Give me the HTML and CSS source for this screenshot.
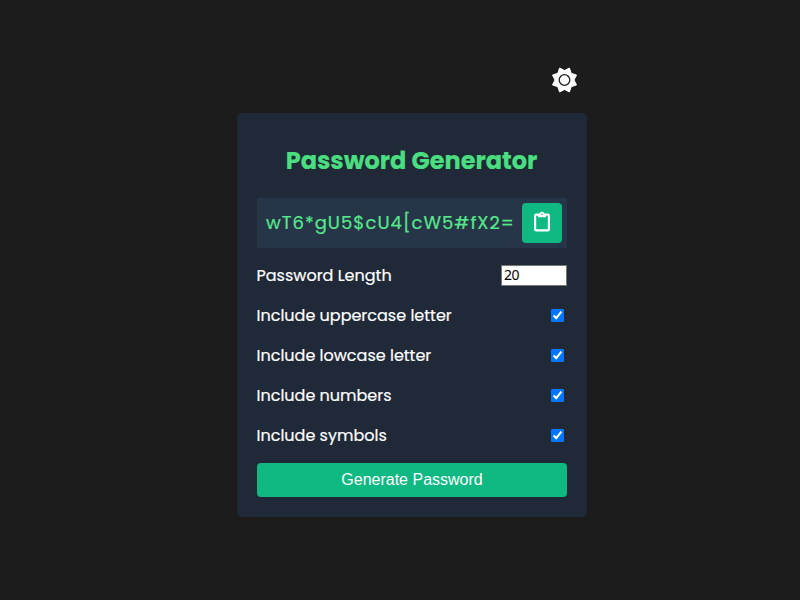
FILE: index.html
```html
<!DOCTYPE html>
<html lang="en">
<head>
<meta charset="utf-8">
<title>Password Generator</title>
<link rel="stylesheet" href="styles.css">
</head>
<body>
<main class="wrapper">
  <button class="theme" aria-label="Toggle theme">
    <svg width="26" height="26" viewBox="-13.5 -13 26 26"><path fill="#fff" stroke="#fff" stroke-width="1" stroke-linejoin="round" d="M0-9.5 4.9-12 6.7-6.7 12-4.9 9.5 0 12 4.9 6.7 6.7 4.9 12 0 9.5-4.9 12-6.7 6.7-12 4.9-9.5 0-12-4.9-6.7-6.7-4.9-12Z"/><circle r="5.3" fill="#fff" stroke="#1c1c1c" stroke-width="1.3"/></svg>
  </button>
  <section class="container">
    <h2 class="title">Password Generator</h2>
    <div class="result">
      <span class="password">wT6*gU5$cU4[cW5#fX2=</span>
      <button class="copy" aria-label="Copy">
        <svg width="16" height="21" viewBox="0 0 16 21" fill="none" stroke="#fff" stroke-width="2.2"><rect x="1.1" y="3.6" width="13.8" height="15.8" rx="1.2"/><path fill="#fff" stroke="none" d="M4 3H5.2A2.9 2.9 0 0 1 10.8 3H12V6.2H4Z"/><circle cx="8" cy="3.2" r=".8" fill="#10b981" stroke="none"/></svg>
      </button>
    </div>
    <div class="setting"><label for="length">Password Length</label><input class="number" id="length" type="number" value="20"></div>
    <div class="setting"><label for="upper">Include uppercase letter</label><input id="upper" type="checkbox" checked></div>
    <div class="setting"><label for="lower">Include lowcase letter</label><input id="lower" type="checkbox" checked></div>
    <div class="setting"><label for="numbers">Include numbers</label><input id="numbers" type="checkbox" checked></div>
    <div class="setting"><label for="symbols">Include symbols</label><input id="symbols" type="checkbox" checked></div>
    <button class="generate">Generate Password</button>
  </section>
</main>
</body>
</html>
```
FILE: styles.css
```css
* { box-sizing: border-box; }
body {
  margin: 0;
  background: #1c1c1c;
  color: #fff;
  font-family: Poppins, Inter, sans-serif;
  font-feature-settings: "cv11";
}
.wrapper {
  width: 350px;
  margin-left: 237px;
  padding-top: 67px;
  display: flex;
  flex-direction: column;
}
.theme {
  align-self: flex-end;
  display: flex;
  width: 26px;
  height: 26px;
  margin: 0 10px 20px 0;
  padding: 0;
  border: 0;
  background: none;
}
.theme svg { overflow: visible; }
.container {
  height: 404px;
  padding: 20px;
  background: #1f2937;
  border-radius: 5px;
}
.title {
  margin: 10px 0 19px;
  padding-right: 1px;
  text-align: center;
  line-height: 36px;
  font-size: 24px;
  font-weight: 700;
  color: #4ade80;
  white-space: nowrap;
  -webkit-text-stroke: .2px;
}
.result {
  height: 50px;
  padding: 0 5px 0 9px;
  display: flex;
  align-items: center;
  justify-content: space-between;
  background: #273548;
}
.password {
  padding-bottom: 2px;
  font-size: 18px;
  letter-spacing: 1px;
  color: #55e98b;
  white-space: nowrap;
  -webkit-text-stroke: .2px;
}
.copy {
  flex: none;
  display: flex;
  justify-content: center;
  align-items: center;
  width: 40px;
  height: 40px;
  padding: 0 0 3px;
  border: 0;
  border-radius: 4px;
  background: #10b981;
}
.setting {
  height: 25px;
  margin: 15px 0;
  display: flex;
  align-items: center;
  justify-content: space-between;
  font-size: 16px;
}
.setting label {
  margin-left: -.5px;
  -webkit-text-stroke: .2px;
}
.number {
  width: 66px;
  height: 21px;
  padding: 0 2px 2px;
  border: 1px solid #767676;
  background: #fff;
  color: #000;
  font: 14px "Noto Sans", sans-serif;
  letter-spacing: -.6px;
}
.setting [type="checkbox"] { margin: 3px; }
.generate {
  display: block;
  width: 100%;
  height: 34px;
  border: 0;
  border-radius: 4px;
  background: #10b981;
  color: #fff;
  font: 16px "Liberation Sans", Arial, sans-serif;
}
```
